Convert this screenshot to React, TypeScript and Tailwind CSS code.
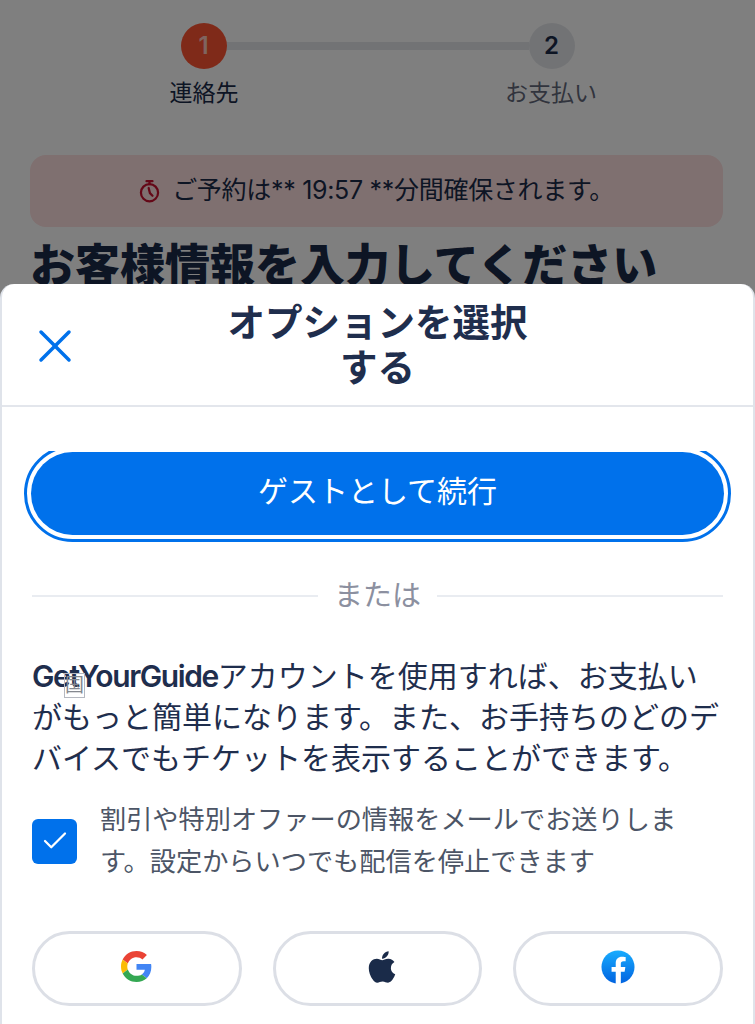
import { Check, X } from "lucide-react";
import { FaApple } from "react-icons/fa";

const jpFont = "font-['Inter','Noto_Sans_CJK_JP',sans-serif]";

function GoogleIcon() {
  return (
    <svg viewBox="0 0 48 48" className="h-[31px] w-[31px]">
      <path fill="#EA4335" d="M24 9.5c3.5 0 6.700 1.200 9.200 3.600l6.900-6.900C35.900 2.400 30.500 0 24 0 14.600 0 6.500 5.400 2.600 13.200l8 6.200C12.500 13.700 17.800 9.500 24 9.500z" />
      <path fill="#4285F4" d="M47 24.500c0-1.600-.1-3.100-.4-4.500H24v9h12.900c-.6 3-2.200 5.500-4.700 7.200l7.700 6C44.400 38.100 47 31.900 47 24.500z" />
      <path fill="#FBBC05" d="M10.500 28.600c-.5-1.400-.8-3-.8-4.600s.3-3.200.8-4.600l-8-6.200C.9 16.500 0 20.100 0 24s.9 7.500 2.600 10.800l7.900-6.200z" />
      <path fill="#34A853" d="M24 48c6.500 0 11.900-2.100 15.900-5.800l-7.700-6c-2.200 1.500-4.900 2.300-8.200 2.300-6.200 0-11.500-4.200-13.400-9.900l-8 6.200C6.500 42.600 14.600 48 24 48z" />
    </svg>
  );
}

function FacebookIcon() {
  return (
    <svg viewBox="0 0 36 36" className="h-[34px] w-[34px]">
      <defs>
        <linearGradient id="fb" x1="0" y1="0" x2="0" y2="1">
          <stop offset="0" stopColor="#18acfe" />
          <stop offset="1" stopColor="#0163e0" />
        </linearGradient>
      </defs>
      <circle cx="18" cy="18" r="17.500" fill="url(#fb)" />
      <path fill="#fff" d="M25 23l.8-5H21v-3.500c0-1.400.7-2.700 2.900-2.700h2.200V7.500S24.100 7.200 22.200 7.200c-4 0-6.600 2.400-6.600 6.800V18h-4.400v5h4.400v12.800a18 18 0 0 0 5.400 0V23H25z" />
    </svg>
  );
}

function TimerIcon() {
  return (
    <svg viewBox="0 0 24 28" fill="none" stroke="#c8102e" strokeWidth="2.600" strokeLinecap="round" className="h-[24px] w-[21px]">
      <circle cx="12" cy="16" r="10" />
      <path d="M8.500 2.500h7M12 2.500v3.500M11 10.500l1.500 6 3 3" />
    </svg>
  );
}

const socialButtons = [
  { name: "google", icon: <GoogleIcon /> },
  { name: "apple", icon: <FaApple className="ml-[8px] h-[36px] w-[36px] text-[#1a2b49]" /> },
  { name: "facebook", icon: <FacebookIcon /> },
];

export default function App() {
  return (
    <div className={`relative h-[1024px] w-[755px] overflow-hidden bg-white text-[#1a2b49] ${jpFont}`}>
      {/* page behind the sheet */}
      <div className="px-[30px] pt-[23px]">
        <div className="flex justify-center">
          <div className="flex w-[497px] flex-col items-center">
            <div className="flex w-full items-center justify-center">
              <div className="flex h-[46px] w-[46px] items-center justify-center rounded-full bg-[#ff5533] text-[24px] font-semibold text-white/70">1</div>
              <div className="h-[8px] w-[302px] bg-[#e5e7eb]" />
              <div className="flex h-[46px] w-[46px] items-center justify-center rounded-full bg-[#e5e7eb] text-[24px] font-semibold">2</div>
            </div>
            <div className="mt-[7px] flex w-full justify-between text-[23px] leading-[34px]">
              <span className="w-[150px] text-center">連絡先</span>
              <span className="w-[150px] text-center text-[#63687a]">お支払い</span>
            </div>
          </div>
        </div>
        <div className="mt-[45px] flex h-[72px] w-[693px] items-center justify-center gap-[12px] rounded-[16px] bg-[#ffe0e0] text-[25px]">
          <TimerIcon />
          <span className="tracking-[-0.3px]">ご予約は** 19:57 **分間確保されます。</span>
        </div>
        <h1 className="mt-[14px] whitespace-nowrap text-[45px] font-black leading-[50px]">お客様情報を入力してください</h1>
      </div>

      <div className="absolute inset-0 bg-black/50" />

      {/* bottom sheet */}
      <div className="absolute inset-x-0 top-[284px] bottom-0 rounded-t-[14px] border-x-[2px] border-[#dfe3ea] bg-white">
        <div className="relative flex h-[123px] items-center justify-center border-b-[2px] border-[#e3e6ec]">
          <button className="absolute left-[25px] top-[34px] text-[#0071eb]">
            <X className="h-[56px] w-[56px]" strokeWidth={1.500} />
          </button>
          <h2 className="w-[310px] text-center text-[37.500px] font-bold leading-[45px] text-[#1f2e4d]">オプションを選択する</h2>
        </div>

        <div className="px-[30px]">
          {/* the ring of the button is cut off at the top of the scroll area */}
          <div className="-mx-[8px] mt-[44px] h-[92px] overflow-hidden">
            <div className="-mt-[6px] rounded-full border-[3px] border-[#0071eb] p-[4px]">
              <button className="flex h-[83px] w-full items-center justify-center rounded-full bg-[#0071eb] pb-[4px] text-[30px] text-white">ゲストとして続行</button>
            </div>
          </div>

          <div className="mt-[33px] flex items-center gap-[16px]">
            <div className="h-[2px] flex-1 bg-[#e9ecf1]" />
            <span className="text-[29px] leading-[40px] text-[#8c90a0]">または</span>
            <div className="h-[2px] flex-1 bg-[#e9ecf1]" />
          </div>

          <div className="relative mt-[40px]">
            <p className="w-[691px] text-[30px] leading-[41px] text-[#1f2e4d]">
              <span className="font-semibold tracking-[-1.400px]">GetYourGuide</span>アカウントを使用すれば、お支払いがもっと簡単になります。また、お手持ちのどのデバイスでもチケットを表示することができます。
            </p>
            <span className="absolute left-[32px] top-[17px] border border-[#b5b8c0] text-[19px] leading-[23px] text-[#85888f]">国</span>
          </div>

          <div className="mt-[20px] flex items-center gap-[23px]">
            <div className="flex h-[45px] w-[45px] shrink-0 items-center justify-center rounded-[6px] bg-[#0071eb]">
              <Check className="h-[30px] w-[30px] text-white" strokeWidth={1.800} />
            </div>
            <p className="w-[590px] text-[26.200px] leading-[42px] text-[#4c5566]">割引や特別オファーの情報をメールでお送りします。設定からいつでも配信を停止できます</p>
          </div>

          <div className="mt-[48px] flex gap-[31px]">
            {socialButtons.map((item) => (
              <button key={item.name} className="flex h-[75px] w-[210px] items-center justify-center rounded-full border-[3.500px] border-[#dcdfe6] pb-[4px]">
                {item.icon}
              </button>
            ))}
          </div>
        </div>
      </div>
    </div>
  );
}
